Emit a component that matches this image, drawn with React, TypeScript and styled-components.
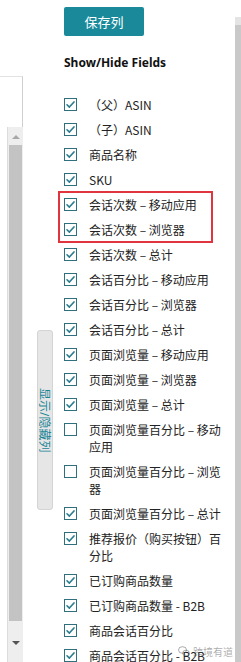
import styled, { createGlobalStyle } from "styled-components";

const GlobalStyle = createGlobalStyle`
	html, body {
		margin: 0;
		padding: 0;
		background: #ffffff;
		overflow: hidden;
	}
	body {
		font-family: "Noto Sans", "Noto Sans CJK SC", sans-serif;
		color: #111111;
	}
`;

const Page = styled.div`
	position: relative;
	display: flex;
	width: 241px;
	height: 662px;
	overflow: hidden;
`;

const LeftPane = styled.div`
	display: flex;
	width: 55px;
	flex-shrink: 0;
`;

const TableStub = styled.div`
	width: 23px;
	margin-top: 76px;
	padding-top: 50px;
	border-top: 1px solid #e2e2e2;
	border-right: 1px solid #cfcfcf;
	box-sizing: border-box;
`;

const ScrollTrack = styled.div`
	display: flex;
	flex-direction: column;
	align-items: center;
	width: 15px;
	height: 540px;
	margin-left: 7px;
	background: #eeeeee;
	border-left: 1px solid #dcdcdc;
`;

const ScrollArrow = styled.div<{ $down?: boolean }>`
	width: 0;
	height: 0;
	margin: ${({ $down }) => ($down ? "20px 0 0" : "8px 0 0")};
	border-left: 4px solid transparent;
	border-right: 4px solid transparent;
	${({ $down }) =>
		$down ? "border-top: 4px solid #555;" : "border-bottom: 4px solid #a8a8a8;"}
`;

const ScrollThumb = styled.div`
	width: 13px;
	height: 476px;
	margin-top: 6px;
	background: #c3c3c3;
`;

const TabColumn = styled.div`
	flex: 1;
	padding: 330px 0 0 14px;
`;

const SideTab = styled.div`
	display: flex;
	align-items: center;
	justify-content: center;
	width: 16px;
	height: 180px;
	box-sizing: border-box;
	background: #e6e6e6;
	border: 1px solid #d4d4d4;
	border-radius: 3px;
	writing-mode: vertical-rl;
	text-orientation: sideways;
	font-size: 12px;
	color: #1b8596;
	white-space: nowrap;
`;

const Panel = styled.div`
	flex: 1;
	padding: 7px 0 0 9px;
`;

const SaveButton = styled.button`
	display: block;
	width: 80px;
	height: 29px;
	border: none;
	border-radius: 2px;
	background: #1a8a9b;
	color: #ffffff;
	font-family: "Noto Sans CJK SC", sans-serif;
	font-size: 13px;
	cursor: pointer;
`;

const Heading = styled.div`
	margin-top: 19px;
	font-size: 12px;
	font-weight: 700;
	line-height: 16px;
	color: #111111;
`;

const FieldList = styled.div`
	margin-top: 21px;
	display: flex;
	flex-direction: column;
`;

const Highlight = styled.div`
	width: 153px;
	margin-left: -5px;
	padding-left: 5px;
	box-sizing: border-box;
	outline: 2px solid #e0353f;
	outline-offset: -1px;
`;

const Row = styled.label`
	display: flex;
	align-items: flex-start;
	gap: 12px;
	padding: 4px 0;
`;

const Box = styled.span<{ $checked: boolean }>`
	display: flex;
	align-items: center;
	justify-content: center;
	flex-shrink: 0;
	width: 13px;
	height: 13px;
	margin-top: 2px;
	box-sizing: border-box;
	border: 1px solid #2f6f7e;
	background: #ffffff;

	svg {
		width: 11px;
		height: 11px;
		visibility: ${({ $checked }) => ($checked ? "visible" : "hidden")};
	}
`;

const Label = styled.span`
	width: 134px;
	font-family: "Noto Sans CJK SC", sans-serif;
	font-size: 12px;
	line-height: 17px;
	color: #222222;
`;

const RightBar = styled.div`
	width: 6px;
	flex-shrink: 0;
	margin-top: 17px;
	background: #c9c9c9;
	border-top: 8px solid #e4e4e4;
`;

// WeChat-style watermark sitting over the last row
const Watermark = styled.div`
	position: absolute;
	right: 8px;
	bottom: 3px;
	display: flex;
	align-items: center;
	gap: 3px;
	font-family: "Noto Sans CJK SC", sans-serif;
	font-size: 10px;
	color: rgba(90, 90, 90, 0.5);
`;

type Field = { label: string; checked: boolean };

const fieldsBefore: Field[] = [
	{ label: "（父）ASIN", checked: true },
	{ label: "（子）ASIN", checked: true },
	{ label: "商品名称", checked: true },
	{ label: "SKU", checked: true },
];

const highlighted: Field[] = [
	{ label: "会话次数 – 移动应用", checked: true },
	{ label: "会话次数 – 浏览器", checked: true },
];

const fieldsAfter: Field[] = [
	{ label: "会话次数 – 总计", checked: true },
	{ label: "会话百分比 – 移动应用", checked: true },
	{ label: "会话百分比 – 浏览器", checked: true },
	{ label: "会话百分比 – 总计", checked: true },
	{ label: "页面浏览量 – 移动应用", checked: true },
	{ label: "页面浏览量 – 浏览器", checked: true },
	{ label: "页面浏览量 – 总计", checked: true },
	{ label: "页面浏览量百分比 – 移动应用", checked: false },
	{ label: "页面浏览量百分比 – 浏览器", checked: false },
	{ label: "页面浏览量百分比 – 总计", checked: true },
	{ label: "推荐报价（购买按钮）百分比", checked: true },
	{ label: "已订购商品数量", checked: true },
	{ label: "已订购商品数量 - B2B", checked: true },
	{ label: "商品会话百分比", checked: true },
	{ label: "商品会话百分比 - B2B", checked: true },
];

const FieldRow = ({ label, checked }: Field) => (
	<Row>
		<Box $checked={checked}>
			<svg viewBox="0 0 12 12" fill="none">
				<path
					d="M2.2 6.3 L4.8 8.8 L9.8 3.2"
					stroke="#2b7d8e"
					strokeWidth="1.8"
					strokeLinecap="round"
					strokeLinejoin="round"
				/>
			</svg>
		</Box>
		<Label>{label}</Label>
	</Row>
);

export default function App() {
	return (
		<>
			<GlobalStyle />
			<Page>
				<LeftPane>
					<TableStub>
						<ScrollTrack>
							<ScrollArrow />
							<ScrollThumb />
							<ScrollArrow $down />
						</ScrollTrack>
					</TableStub>
					<TabColumn>
						<SideTab>显示/隐藏列</SideTab>
					</TabColumn>
				</LeftPane>
				<Panel>
					<SaveButton>保存列</SaveButton>
					<Heading>Show/Hide Fields</Heading>
					<FieldList>
						{fieldsBefore.map((f) => (
							<FieldRow key={f.label} {...f} />
						))}
						<Highlight>
							{highlighted.map((f) => (
								<FieldRow key={f.label} {...f} />
							))}
						</Highlight>
						{fieldsAfter.map((f) => (
							<FieldRow key={f.label} {...f} />
						))}
					</FieldList>
				</Panel>
				<RightBar />
				<Watermark>
					<svg width="12" height="11" viewBox="0 0 12 11" fill="none">
						<ellipse cx="4.5" cy="4" rx="4" ry="3.3" stroke="rgba(90,90,90,0.5)" />
						<ellipse cx="8" cy="7" rx="3.3" ry="2.8" stroke="rgba(90,90,90,0.5)" />
					</svg>
					跨境有道
				</Watermark>
			</Page>
		</>
	);
}
